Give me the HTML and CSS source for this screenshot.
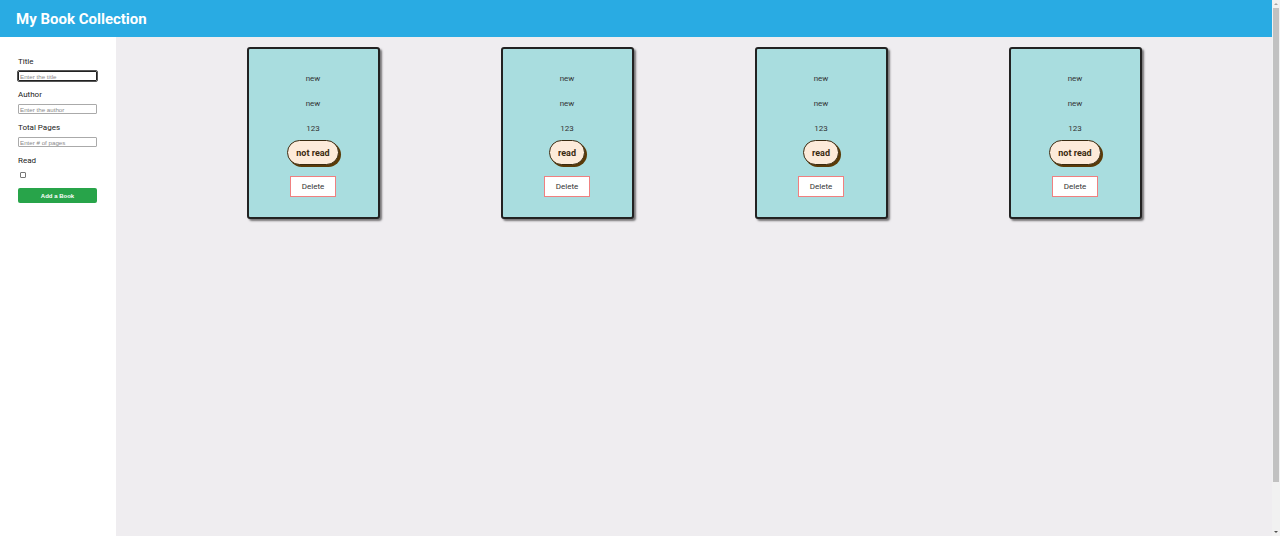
FILE: index.html
```html
<!DOCTYPE html>
<html lang="en">
<head>
<meta charset="utf-8">
<title>My Book Collection</title>
<link rel="stylesheet" href="styles.css">
</head>
<body>
<div class="page">
  <header class="header"><h1 class="title">My Book Collection</h1></header>
  <div class="layout">
    <aside class="sidebar">
      <form class="form">
        <label class="field-label" for="title">Title</label>
        <input class="field-input focused" id="title" type="text" placeholder="Enter the title">
        <label class="field-label" for="author">Author</label>
        <input class="field-input" id="author" type="text" placeholder="Enter the author">
        <label class="field-label" for="pages">Total Pages</label>
        <input class="field-input" id="pages" type="text" placeholder="Enter # of pages">
        <label class="field-label" for="read">Read</label>
        <input class="field-check" id="read" type="checkbox">
        <button class="add-btn" type="button">Add a Book</button>
      </form>
    </aside>
    <main class="library">
      <div class="card">
        <p class="card-text">new</p>
        <p class="card-text">new</p>
        <p class="card-text">123</p>
        <button class="read-btn" type="button">not read</button>
        <button class="delete-btn" type="button">Delete</button>
      </div>
      <div class="card">
        <p class="card-text">new</p>
        <p class="card-text">new</p>
        <p class="card-text">123</p>
        <button class="read-btn" type="button">read</button>
        <button class="delete-btn" type="button">Delete</button>
      </div>
      <div class="card">
        <p class="card-text">new</p>
        <p class="card-text">new</p>
        <p class="card-text">123</p>
        <button class="read-btn" type="button">read</button>
        <button class="delete-btn" type="button">Delete</button>
      </div>
      <div class="card">
        <p class="card-text">new</p>
        <p class="card-text">new</p>
        <p class="card-text">123</p>
        <button class="read-btn" type="button">not read</button>
        <button class="delete-btn" type="button">Delete</button>
      </div>
    </main>
  </div>
</div>
<div class="scrollbar" aria-hidden="true">
  <span class="scroll-arrow up"></span>
  <span class="scroll-thumb"></span>
  <span class="scroll-arrow down"></span>
</div>
</body>
</html>
```
FILE: styles.css
```css
html, body {
  margin: 0;
  padding: 0;
  overflow: hidden;
}
body {
  font-family: Roboto, "Liberation Sans", sans-serif;
  color: #333;
  background: #efedf0;
}
.page {
  margin-right: 8px;
}
.scrollbar {
  position: fixed;
  top: 0;
  right: 0;
  width: 8px;
  height: 100vh;
  background: #f1f1f1;
  display: flex;
  flex-direction: column;
  align-items: center;
}
.scroll-arrow {
  height: 8px;
  width: 8px;
  display: flex;
  align-items: center;
  justify-content: center;
}
.scroll-arrow::before {
  content: "";
  width: 0;
  height: 0;
  border-left: 2px solid transparent;
  border-right: 2px solid transparent;
}
.scroll-arrow.up::before {
  border-bottom: 2px solid #a3a3a3;
}
.scroll-arrow.down::before {
  border-top: 2px solid #505050;
}
.scroll-thumb {
  width: 6px;
  height: 474px;
  background: #c1c1c1;
  flex-shrink: 0;
}
.scroll-arrow.down {
  margin-top: auto;
}
.header {
  height: 37px;
  background: #29abe3;
  display: flex;
  align-items: center;
  padding: 0 16px;
}
.title {
  margin: 0;
  color: #fff;
  font-size: 15px;
  font-weight: 700;
}
.layout {
  display: flex;
  height: calc(100vh - 37px);
}
.sidebar {
  width: 116px;
  background: #fff;
  flex-shrink: 0;
}
.form {
  display: flex;
  flex-direction: column;
  align-items: flex-start;
  padding: 20px 19px 0 18px;
}
.field-label {
  font-size: 8px;
  color: #222;
  margin-bottom: 5px;
}
.field-input {
  box-sizing: border-box;
  width: 79px;
  height: 10px;
  font-size: 6.2px;
  padding: 0 1px;
  margin: 0 0 9px 0;
  border: 1px solid #aaa;
  border-radius: 1px;
  font-family: "Liberation Sans", sans-serif;
}
.field-input.focused {
  border: 1px solid #222;
  outline: 1px solid #555;
}
.field-input::placeholder {
  color: #8a8a8a;
}
.field-check {
  appearance: none;
  -webkit-appearance: none;
  box-sizing: border-box;
  width: 6px;
  height: 6px;
  margin: 2px 0 10px 2px;
  border: 1px solid #767676;
  border-radius: 1px;
  background: #fff;
}
.add-btn {
  width: 79px;
  height: 15px;
  background: #28a44a;
  color: #fff;
  border: none;
  border-radius: 2px;
  font-size: 6px;
  font-weight: 700;
  font-family: "Liberation Sans", sans-serif;
}
.library {
  flex: 1;
  display: grid;
  grid-template-columns: repeat(4, 254px);
  justify-content: center;
  justify-items: center;
  align-items: start;
  padding-top: 10px;
}
.card {
  box-sizing: border-box;
  width: 133px;
  height: 172px;
  background: #a9dddf;
  border: 2px solid #222;
  border-radius: 3px;
  box-shadow: 2px 2px 2px rgba(0,0,0,0.5);
  display: flex;
  flex-direction: column;
  align-items: center;
  padding-top: 25px;
}
.card-text {
  margin: 0 0 15px 0;
  font-size: 8px;
  line-height: 10px;
  color: #333;
}
.card-text:nth-child(3) {
  margin-bottom: 6px;
}
.read-btn {
  height: 25px;
  padding: 0 8px;
  background: #fdebda;
  border: 1.5px solid #3a2a10;
  border-radius: 13px;
  box-shadow: 2px 2px 0 #5a3a08;
  font-family: Roboto, sans-serif;
  font-weight: 700;
  font-size: 9px;
  color: #3a2a10;
}
.delete-btn {
  margin-top: 11px;
  width: 46px;
  height: 21px;
  background: #fff;
  border: 1px solid #f08080;
  font-family: Roboto, sans-serif;
  font-size: 8px;
  color: #333;
}
```
